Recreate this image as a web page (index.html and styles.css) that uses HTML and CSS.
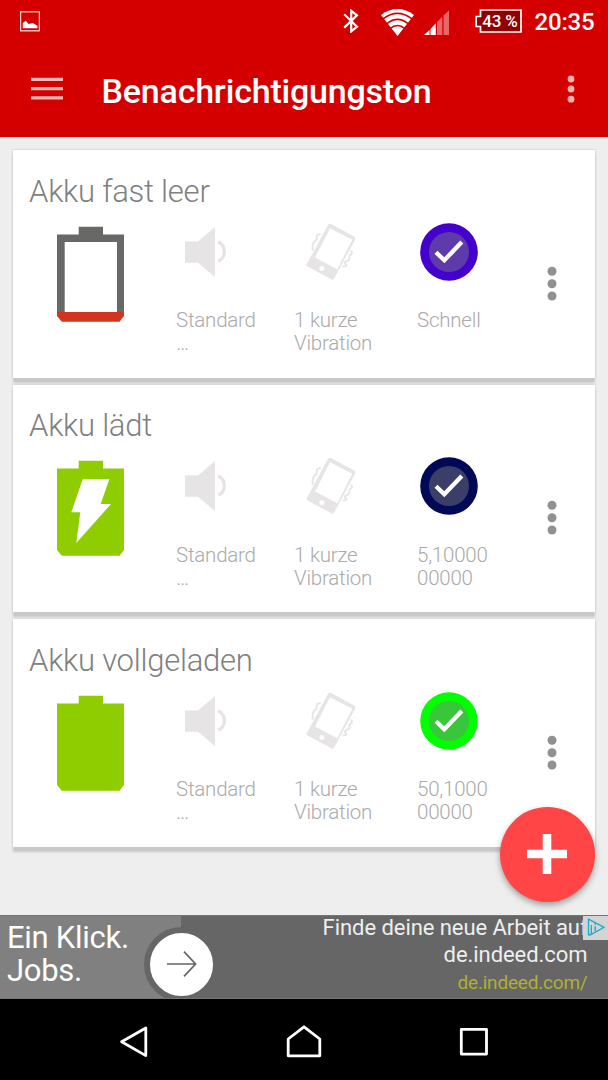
FILE: index.html
```html
<!DOCTYPE html>
<html lang="de">
<head>
  <meta charset="UTF-8">
  <title>Benachrichtigungston</title>
  <link rel="stylesheet" href="styles.css">
</head>
<body>

  <!-- shared icons -->
  <svg class="defs" width="0" height="0">
    <symbol id="speaker" viewBox="0 0 42 58">
      <path d="M0 18.5H13L30 4V54L13 39.8H0Z" fill="#e6e4e5"/>
      <path d="M33.3 18.8C36.5 20.5 39.3 24 39.3 28.7S36.5 37 33.3 38.2" fill="none" stroke="#e6e4e5" stroke-width="3.4"/>
    </symbol>
    <symbol id="vibrate" viewBox="0 0 50 58">
      <path fill="#e6e4e5" fill-rule="evenodd" d="M24.5 .8L48.4 13.8Q50 15 49.1 16.8L27.8 56Q27 57.2 25.8 56.5L1.2 43.3Q0 42.6 .7 41.3L22 2Q23 .4 24.5 .8ZM24 5.2L9 34.5L31.3 46.2L46.3 16.8ZM18.4 45.5A2.5 2.5 0 1 0 13.4 45.5A2.5 2.5 0 1 0 18.4 45.5Z"/>
      <path fill="none" stroke="#e6e4e5" stroke-width="1.9" d="M14.8 11.2Q10.5 11 10.8 13.8T9.8 17.4T7.4 20.2T6.6 23.8T6.4 27.8M45 27.5Q47 30 44.8 31.6T43.4 35T40.8 38T39.8 41.2T36.2 43.6"/>
    </symbol>
    <symbol id="check" viewBox="0 0 58 58">
      <circle cx="29" cy="29" r="28.8" fill="currentColor"/>
      <circle cx="29" cy="29" r="20" fill="#808080" fill-opacity=".45"/>
      <path d="M16 29.2L24.3 37.3L41.8 19" fill="none" stroke="#fff" stroke-width="4.3"/>
    </symbol>
    <symbol id="dots" viewBox="0 0 10 36">
      <circle cx="5" cy="5.2" r="4.5"/>
      <circle cx="5" cy="17.7" r="4.5"/>
      <circle cx="5" cy="30" r="4.5"/>
    </symbol>
  </svg>

  <div class="statusbar">
    <svg class="st-image" width="20" height="21" viewBox="0 0 20 21">
      <rect x=".6" y=".8" width="18.8" height="19" fill="none" stroke="#f9d0d0" stroke-width="1.3"/>
      <path d="M2.8 17.2V12L5.8 9.8L8.5 13L12.8 12L17.4 14.8V17.2Z" fill="#fff"/>
    </svg>
    <svg class="st-bt" width="16" height="24" viewBox="0 0 16 24">
      <path d="M1.2 5.2L14 17.6L8.2 22.4V1.8L14 6.4L1.2 18.6" fill="none" stroke="#fff" stroke-width="2.2"/>
    </svg>
    <svg class="st-wifi" width="33" height="28" viewBox="0 0 33 28">
      <path d="M0 6Q16.5-5.8 33 6L16.5 27Z" fill="#fff"/>
      <path d="M2 9.8Q16.5-1 31 9.8M6 14.6Q16.5 6.2 27 14.6M9 19.6Q16.5 13.4 24 19.6" fill="none" stroke="#d40000" stroke-width="1.6"/>
    </svg>
    <svg class="st-signal" width="26" height="26" viewBox="0 0 26 26">
      <path d="M0 25L5.5 20V25ZM6.5 19L11.8 13.3V25H6.5Z" fill="#fff"/>
      <path d="M13 12L18.3 6.7V25H13ZM19.6 5.5L25 .3V25H19.6Z" fill="#e96767"/>
    </svg>
    <div class="st-battery">
      <svg width="47" height="24" viewBox="0 0 47 24">
        <path d="M5.5 1H46V23H5.5V17.5H1.2V7.5H5.5Z" fill="#8f0000" stroke="#fff" stroke-width="1.7"/>
      </svg>
      <span>43 %</span>
    </div>
    <span class="st-time">20:35</span>
  </div>

  <div class="appbar">
    <svg width="32" height="24" viewBox="0 0 32 24">
      <path d="M0 2.4H32M0 11.6H32M0 20.8H32" stroke="#f4b5b5" stroke-width="3.3"/>
    </svg>
    <h1>Benachrichtigungston</h1>
    <svg class="appbar-menu" width="8" height="28" viewBox="0 0 8 28">
      <g fill="#f2b0b0">
        <circle cx="4" cy="4" r="3.4"/>
        <circle cx="4" cy="14" r="3.4"/>
        <circle cx="4" cy="24.2" r="3.4"/>
      </g>
    </svg>
  </div>

  <div class="content">
    <div class="card">
      <h2>Akku fast leer</h2>
      <div class="row">
        <svg class="battery" width="68" height="100" viewBox="0 0 68 100">
          <path fill="#686967" fill-rule="evenodd" d="M0 11.5H21.7V3.7H46V11.5H67V90H0ZM7.7 19V90H60V19Z"/>
          <path fill="#d2351d" d="M0 89H67V93L62.5 98.8H4.8L0 93Z"/>
        </svg>
        <div class="cell">
          <svg class="i-speaker" width="42" height="58"><use href="#speaker"/></svg>
          <p>Standard<br>…</p>
        </div>
        <div class="cell">
          <svg class="i-vibrate" width="50" height="58"><use href="#vibrate"/></svg>
          <p>1 kurze<br>Vibration</p>
        </div>
        <div class="cell">
          <svg class="i-check violet" width="58" height="58"><use href="#check"/></svg>
          <p>Schnell</p>
        </div>
        <svg class="more" width="10" height="36"><use href="#dots"/></svg>
      </div>
    </div>

    <div class="card">
      <h2>Akku lädt</h2>
      <div class="row">
        <svg class="battery" width="68" height="100" viewBox="0 0 68 100">
          <path fill="#8fcc00" d="M0 11.5H21.7V3.7H46V11.5H67V93L62.5 98.8H4.8L0 93Z"/>
          <path fill="#fff" d="M25.7 22.3H52.3L43.7 47H54L19.3 86L23.3 55.3H14.3Z"/>
        </svg>
        <div class="cell">
          <svg class="i-speaker" width="42" height="58"><use href="#speaker"/></svg>
          <p>Standard<br>…</p>
        </div>
        <div class="cell">
          <svg class="i-vibrate" width="50" height="58"><use href="#vibrate"/></svg>
          <p>1 kurze<br>Vibration</p>
        </div>
        <div class="cell">
          <svg class="i-check navy" width="58" height="58"><use href="#check"/></svg>
          <p>5,10000<br>00000</p>
        </div>
        <svg class="more" width="10" height="36"><use href="#dots"/></svg>
      </div>
    </div>

    <div class="card">
      <h2>Akku vollgeladen</h2>
      <div class="row">
        <svg class="battery" width="68" height="100" viewBox="0 0 68 100">
          <path fill="#8fcc00" d="M0 11.5H21.7V3.7H46V11.5H67V93L62.5 98.8H4.8L0 93Z"/>
        </svg>
        <div class="cell">
          <svg class="i-speaker" width="42" height="58"><use href="#speaker"/></svg>
          <p>Standard<br>…</p>
        </div>
        <div class="cell">
          <svg class="i-vibrate" width="50" height="58"><use href="#vibrate"/></svg>
          <p>1 kurze<br>Vibration</p>
        </div>
        <div class="cell">
          <svg class="i-check green" width="58" height="58"><use href="#check"/></svg>
          <p>50,1000<br>00000</p>
        </div>
        <svg class="more" width="10" height="36"><use href="#dots"/></svg>
      </div>
    </div>

    <button class="fab">
      <svg width="40" height="40" viewBox="0 0 40 40">
        <path d="M0 20H40M20 0V40" stroke="#fff" stroke-width="8.6"/>
      </svg>
    </button>
  </div>

  <div class="ad">
    <div class="ad-left">Ein Klick.<br>Jobs.</div>
    <div class="ad-right">
      <p>Finde deine neue Arbeit auf</p>
      <p>de.indeed.com</p>
      <p class="ad-url">de.indeed.com/</p>
    </div>
    <div class="ad-arrow">
      <svg width="30" height="26" viewBox="0 0 30 26">
        <path d="M0 13H28M17 .7L28.6 13L17 25.3" fill="none" stroke="#666" stroke-width="1.7"/>
      </svg>
    </div>
    <div class="ad-choices">
      <svg width="18" height="19" viewBox="0 0 18 19">
        <path d="M1.5 17.3V1.2L17 9.3L4.3 16.3V7" fill="none" stroke="#25acc9" stroke-width="1.4"/>
        <path d="M1.5 17.3L4.3 16.3M8.2 4.9V6.8M8.2 8.2V13" stroke="#25acc9" stroke-width="1.5"/>
      </svg>
    </div>
  </div>

  <div class="navbar">
    <svg width="30" height="34" viewBox="0 0 30 34">
      <path d="M2.6 16.8L26.8 3V30.6Z" fill="none" stroke="#fff" stroke-width="2.8" stroke-linejoin="round"/>
    </svg>
    <svg width="36" height="34" viewBox="0 0 36 34">
      <path d="M2.2 30.8V14L18 1.8L33.8 14V30.8Z" fill="none" stroke="#fff" stroke-width="2.8" stroke-linejoin="round"/>
    </svg>
    <svg width="30" height="34" viewBox="0 0 30 34">
      <rect x="2.3" y="4.3" width="25.2" height="24.8" fill="none" stroke="#fff" stroke-width="2.8" stroke-linejoin="round"/>
    </svg>
  </div>

</body>
</html>
```

FILE: styles.css
```css
* { box-sizing: border-box; margin: 0; padding: 0; }
body { width: 608px; height: 1080px; overflow: hidden; font-family: Roboto, sans-serif; background: #eee; }
svg { display: block; flex: none; }
.defs { position: absolute; }

/* top */
.statusbar { display: flex; align-items: flex-start; height: 44px; padding: 9px 13.5px 0 20px; background: #d40000; color: #fff; }
.st-image { margin-top: 2px; }
.st-bt { margin-left: 303px; }
.st-wifi { margin-left: 22px; }
.st-signal { margin: 1px 0 0 10px; }
.st-battery { position: relative; margin-left: 25px; }
.st-battery span { position: absolute; left: 6px; top: 2px; width: 38px; font-size: 17px; font-weight: 500; line-height: 20px; letter-spacing: -0.2px; text-align: center; white-space: nowrap; }
.st-time { margin: -1px 0 0 auto; font-size: 24px; font-weight: 500; line-height: 28px; letter-spacing: -0.2px; }
.appbar { display: flex; align-items: center; height: 92.5px; padding: 0 33px 2px 31px; background: #d40000; color: #fff; }
.appbar h1 { margin: 3px 0 0 38.5px; font-size: 34px; font-weight: 500; line-height: 40px; letter-spacing: -0.2px; }
.appbar-menu { margin-left: auto; }

/* cards */
.content { position: relative; height: 778px; padding: 13.5px 13.5px 0 13px; }
.card { height: 227.5px; margin-bottom: 7px; padding: 23.6px 16px 0; background: #fff; box-shadow: 0 5px 2px #c8c8c8, 0 0 2px #bbb; }
.card h2 { font-size: 31px; font-weight: 300; line-height: 36px; letter-spacing: -0.24px; color: #808080; }
.row { display: grid; grid-template-columns: 147px 118px 123px 1fr 32px; margin-top: 13px; }
.battery { margin-left: 28px; }
.cell p { margin-top: 28.5px; font-size: 20.5px; font-weight: 300; line-height: 23px; letter-spacing: -0.22px; color: #aaa; white-space: nowrap; }
.i-speaker { margin-left: 9px; }
.i-vibrate { margin-left: 12px; }
.i-check { margin-left: 3px; }
.violet { color: #4400cc; }
.navy { color: #000955; }
.green { color: #00ff00; }
.more { margin-top: 43px; fill: #919191; }
.fab { position: absolute; left: 499.5px; top: 670px; width: 95px; height: 95px; display: flex; align-items: center; justify-content: center; border: none; border-radius: 50%; background: #ff4545; box-shadow: 0 3px 6px rgba(0,0,0,0.35); }

/* ad banner */
.ad { position: relative; display: flex; height: 84.5px; overflow: hidden; border-top: 1.5px solid #747474; border-bottom: 1.5px solid #747474; background: #666; }
.ad-left { width: 181px; padding: 5px 0 0 7px; background: #808080; color: #fff; font-size: 31px; line-height: 33.5px; letter-spacing: -0.28px; }
.ad-right { flex: 1; margin-top: -2px; padding-right: 20.5px; font-size: 22px; line-height: 27px; letter-spacing: -0.06px; text-align: right; color: #eee; }
.ad-right .ad-url { font-size: 19px; line-height: 29px; letter-spacing: -0.2px; color: #b0b032; }
.ad-arrow { position: absolute; left: 144px; top: 11px; width: 75px; height: 75px; display: flex; align-items: center; justify-content: center; border: 6px solid #666; border-radius: 50%; background: #fff; }
.ad-choices { position: absolute; right: 0; top: -1px; width: 25px; height: 25px; padding: 3px 4px; background: #d4d4d4; }

.navbar { display: flex; align-items: center; justify-content: center; gap: 137px; height: 81px; padding-top: 5px; background: #000; }
```
